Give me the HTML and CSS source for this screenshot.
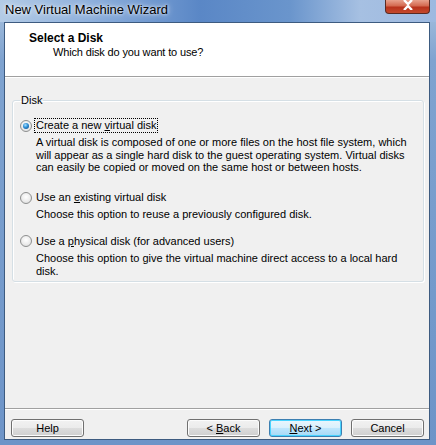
FILE: index.html
```html
<!DOCTYPE html>
<html>
<head>
<meta charset="utf-8">
<link rel="stylesheet" href="styles.css">
</head>
<body>
<div class="frame">
  <div class="titlebar">
    <span class="title">New Virtual Machine Wizard</span>
    <div class="close"><svg width="12" height="10" viewBox="0 0 12 10"><path d="M2 0 L6 4 L10 0 M2 10 L6 6 L10 10" stroke="#fff" stroke-width="2.4" fill="none"/></svg></div>
  </div>
  <div class="client">
    <div class="header">
      <div class="h-title">Select a Disk</div>
      <div class="h-sub">Which disk do you want to use?</div>
    </div>
    <div class="body">
      <fieldset class="group">
        <legend>Disk</legend>
        <div class="option">
          <div class="opt-row"><span class="radio checked"></span><span class="label focus">Create a new <u>v</u>irtual disk</span></div>
          <p class="desc">A virtual disk is composed of one or more files on the host file system, which will appear as a single hard disk to the guest operating system. Virtual disks can easily be copied or moved on the same host or between hosts.</p>
        </div>
        <div class="option">
          <div class="opt-row"><span class="radio"></span><span class="label">Use an <u>e</u>xisting virtual disk</span></div>
          <p class="desc">Choose this option to reuse a previously configured disk.</p>
        </div>
        <div class="option">
          <div class="opt-row"><span class="radio"></span><span class="label">Use a <u>p</u>hysical disk (for advanced users)</span></div>
          <p class="desc">Choose this option to give the virtual machine direct access to a local hard disk.</p>
        </div>
      </fieldset>
    </div>
    <div class="footer">
      <button class="btn">Help</button>
      <div class="spacer"></div>
      <button class="btn">&lt; <u>B</u>ack</button>
      <button class="btn default"><u>N</u>ext &gt;</button>
      <button class="btn">Cancel</button>
    </div>
  </div>
</div>
</body>
</html>
```

FILE: styles.css
```css
html, body {
  margin: 0;
  padding: 0;
  width: 436px;
  height: 445px;
  overflow: hidden;
}
body {
  font-family: "Liberation Sans", Arial, sans-serif;
  font-size: 11px;
  color: #000;
}
.frame {
  width: 436px;
  height: 445px;
  box-sizing: border-box;
  padding: 0 6px 5px 4px;
  background: linear-gradient(180deg, #a9c2df 0px, #7fa3d0 60px, #6d94c8 445px);
  display: flex;
  flex-direction: column;
}
.titlebar {
  height: 22px;
  flex: none;
  margin: 0 -6px 0 -4px;
  padding: 0 6px 0 5px;
  display: flex;
  align-items: flex-start;
  background: linear-gradient(90deg, #b3cbe6 0px, #8eb0dc 90px, #5a87c6 200px, #6a95cc 290px, #a6c0e2 360px, #9db9e0 436px);
  position: relative;
}
.title {
  font-family: "Liberation Sans", Arial, sans-serif;
  font-size: 13px;
  line-height: 20px;
  color: #000;
  text-shadow: 0 0 6px rgba(255,255,255,0.9), 0 0 3px rgba(255,255,255,0.8);
}
.close {
  position: absolute;
  right: 6px;
  top: 0;
  width: 45px;
  height: 14px;
  box-sizing: border-box;
  border: 1px solid #5a2a22;
  border-top: none;
  border-radius: 0 0 4px 4px;
  background: linear-gradient(180deg, #e8a18d 0%, #d46a50 45%, #b8321c 55%, #c44a2c 100%);
  display: flex;
  align-items: center;
  justify-content: center;
}
.close svg { margin-top: -4px; }
.client {
  flex: 1;
  border: 1px solid #3d5b80;
  background: #f0f0f0;
  display: flex;
  flex-direction: column;
  min-height: 0;
}
.header {
  height: 53px;
  flex: none;
  background: #fff;
  border-bottom: 1px solid #a0a0a0;
  box-shadow: 0 1px 0 #fff;
}
.h-title {
  font-weight: bold;
  font-size: 12px;
  padding-left: 24px;
  padding-top: 8px;
  line-height: 15px;
}
.h-sub {
  padding-left: 48px;
  line-height: 13px;
  letter-spacing: -0.15px;
}
.body {
  flex: 1;
  padding: 17px 5px 0 7px;
}
.group {
  margin: 0;
  height: 188px;
  box-sizing: border-box;
  border: 1px solid #d5dfe5;
  border-radius: 3px;
  box-shadow: inset 1px 1px 0 #fff, 1px 1px 0 #fff;
  padding: 12px 8px 0 7px;
}
.group legend {
  padding: 0 1px;
  line-height: 12px;
}
.option { margin-bottom: 16px; }
.option:nth-of-type(2) { margin-bottom: 13px; }
.opt-row {
  display: flex;
  align-items: center;
  height: 15px;
}
.radio {
  width: 12px;
  height: 12px;
  box-sizing: border-box;
  border-radius: 50%;
  border: 1px solid #8e8f8f;
  background: radial-gradient(circle at 50% 40%, #ffffff 0%, #eeeeee 50%, #d6d6d6 100%);
  margin-right: 3px;
  flex: none;
  position: relative;
}
.radio.checked::after {
  content: "";
  position: absolute;
  left: 2px;
  top: 2px;
  width: 6px;
  height: 6px;
  border-radius: 50%;
  background: radial-gradient(circle at 40% 35%, #a9e0ff 0%, #2c8ed6 45%, #10417a 100%);
}
.label {
  line-height: 13px;
  padding: 0 1px;
}
.label.focus {
  outline: 1px dotted #000;
  outline-offset: 0;
}
.desc {
  margin: 3px 0 0 16px;
  padding-right: 4px;
  line-height: 12.7px;
}
.footer {
  flex: none;
  height: 31px;
  box-sizing: border-box;
  border-top: 1px solid #a0a0a0;
  box-shadow: inset 0 1px 0 #fff;
  display: flex;
  align-items: flex-start;
  padding: 10px 5px 0 6px;
  gap: 9px;
}
.spacer { flex: 1; }
.btn {
  width: 73px;
  height: 18px;
  padding: 0;
  font-family: "Liberation Sans", Arial, sans-serif;
  font-size: 11px;
  color: #000;
  border: 1px solid #707070;
  border-radius: 3px;
  background: linear-gradient(180deg, #f2f2f2 0%, #ebebeb 50%, #dddddd 51%, #cfcfcf 100%);
  box-shadow: inset 0 0 0 1px #fcfcfc;
}
.btn.default {
  border-color: #3c7fb1;
  background: linear-gradient(180deg, #eaf6fd 0%, #d9f0fc 50%, #bee6fd 51%, #a7d9f5 100%);
  box-shadow: inset 0 0 0 1px #48d4ff;
}
```
